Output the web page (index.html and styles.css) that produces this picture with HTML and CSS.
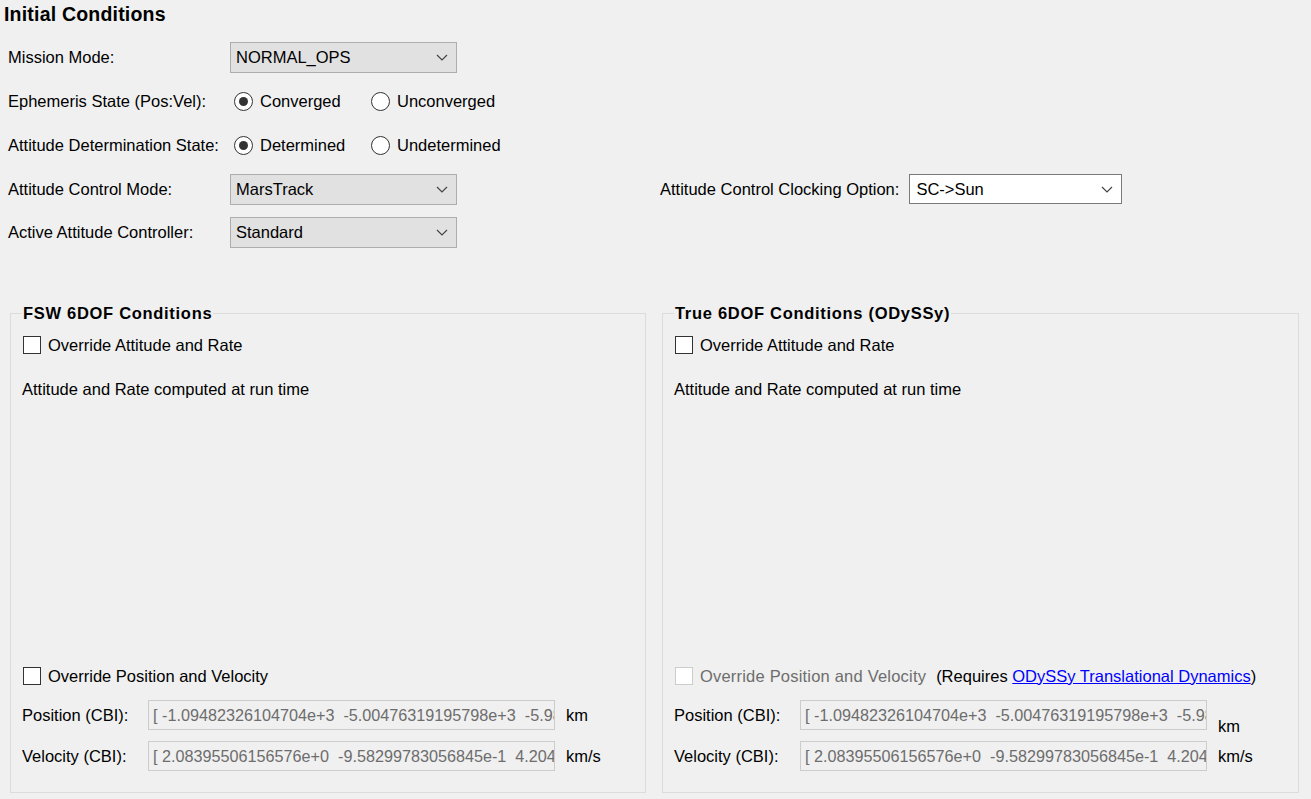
FILE: index.html
```html
<!DOCTYPE html>
<html>
<head>
<meta charset="utf-8">
<title>Initial Conditions</title>
<link rel="stylesheet" href="styles.css">
</head>
<body>
<div class="page">
  <h1 class="title">Initial Conditions</h1>
  <div class="form">
    <div class="row">
      <span class="label">Mission Mode:</span>
      <div class="combo"><span class="combo-text">NORMAL_OPS</span><svg class="chev" viewBox="0 0 12 7"><polyline points="1,1 6,6 11,1"/></svg></div>
    </div>
    <div class="row">
      <span class="label">Ephemeris State (Pos:Vel):</span>
      <div class="radios">
        <span class="radio"><span class="dot checked"></span>Converged</span>
        <span class="radio"><span class="dot"></span>Unconverged</span>
      </div>
    </div>
    <div class="row">
      <span class="label">Attitude Determination State:</span>
      <div class="radios">
        <span class="radio"><span class="dot checked"></span>Determined</span>
        <span class="radio"><span class="dot"></span>Undetermined</span>
      </div>
    </div>
    <div class="row">
      <span class="label">Attitude Control Mode:</span>
      <div class="combo"><span class="combo-text">MarsTrack</span><svg class="chev" viewBox="0 0 12 7"><polyline points="1,1 6,6 11,1"/></svg></div>
      <span class="clock-label">Attitude Control Clocking Option:</span>
      <div class="combo combo-white"><span class="combo-text">SC-&gt;Sun</span><svg class="chev" viewBox="0 0 12 7"><polyline points="1,1 6,6 11,1"/></svg></div>
    </div>
    <div class="row row-last">
      <span class="label">Active Attitude Controller:</span>
      <div class="combo"><span class="combo-text">Standard</span><svg class="chev" viewBox="0 0 12 7"><polyline points="1,1 6,6 11,1"/></svg></div>
    </div>
  </div>

  <div class="groups">
    <fieldset class="group group-left">
      <legend>FSW 6DOF Conditions</legend>
      <div class="group-body">
        <div class="check"><span class="box"></span>Override Attitude and Rate</div>
        <p class="note">Attitude and Rate computed at run time</p>
        <div class="spacer"></div>
        <div class="check"><span class="box"></span>Override Position and Velocity</div>
        <div class="vec-row vec-first">
          <span class="vec-label">Position (CBI):</span>
          <input class="vec" readonly value="[ -1.09482326104704e+3  -5.00476319195798e+3  -5.98246197330785e+3 ]">
          <span class="unit">km</span>
        </div>
        <div class="vec-row">
          <span class="vec-label">Velocity (CBI):</span>
          <input class="vec" readonly value="[ 2.08395506156576e+0  -9.58299783056845e-1  4.20455093267434e+0 ]">
          <span class="unit">km/s</span>
        </div>
      </div>
    </fieldset>
    <fieldset class="group group-right">
      <legend>True 6DOF Conditions (ODySSy)</legend>
      <div class="group-body">
        <div class="check"><span class="box"></span>Override Attitude and Rate</div>
        <p class="note">Attitude and Rate computed at run time</p>
        <div class="spacer"></div>
        <div class="check check-disabled"><span class="box"></span><span class="dis-text">Override Position and Velocity</span><span class="req">(Requires <a href="#" class="link">ODySSy Translational Dynamics</a>)</span></div>
        <div class="vec-row vec-first">
          <span class="vec-label">Position (CBI):</span>
          <input class="vec" readonly value="[ -1.09482326104704e+3  -5.00476319195798e+3  -5.98246197330785e+3 ]">
          <span class="unit unit-low">km</span>
        </div>
        <div class="vec-row">
          <span class="vec-label">Velocity (CBI):</span>
          <input class="vec" readonly value="[ 2.08395506156576e+0  -9.58299783056845e-1  4.20455093267434e+0 ]">
          <span class="unit">km/s</span>
        </div>
      </div>
    </fieldset>
  </div>
</div>
</body>
</html>
```
FILE: styles.css
```css
* { box-sizing: border-box; }
html, body {
  margin: 0;
  padding: 0;
  background: #f0f0f0;
}
body {
  font-family: "Liberation Sans", Arial, sans-serif;
  font-size: 16.5px;
  color: #000;
  width: 1311px;
  height: 799px;
  overflow: hidden;
}
.page {
  padding: 2px 0 0 0;
}
.title {
  margin: 0 0 9px 4px;
  font-size: 19.5px;
  font-weight: bold;
  letter-spacing: 0.2px;
  line-height: 24px;
  height: 24px;
}
.form {
  display: flex;
  flex-direction: column;
  padding-left: 8px;
}
.row {
  display: flex;
  align-items: center;
  height: 44px;
}
.row-last { height: 42px; }
.label {
  width: 222px;
  flex: none;
}
.combo {
  width: 227px;
  height: 31px;
  flex: none;
  display: flex;
  align-items: center;
  justify-content: space-between;
  background: #e1e1e1;
  border: 1px solid #adadad;
  padding: 0 8px 0 5px;
}
.combo-text { line-height: 20px; }
.chev {
  width: 12px;
  height: 7px;
  fill: none;
  stroke: #444;
  stroke-width: 1.2;
}
.clock-label {
  margin-left: 203px;
  flex: none;
}
.combo-white {
  width: 213px;
  height: 30px;
  margin-left: 10px;
  background: #fff;
  border: 1px solid #7a7a7a;
  padding-left: 6px;
}
.radios {
  display: grid;
  grid-template-columns: 137px auto;
  padding-left: 4px;
}
.radio {
  display: flex;
  align-items: center;
  gap: 7px;
}
.dot {
  width: 19px;
  height: 19px;
  border: 1px solid #333;
  border-radius: 50%;
  background: #fff;
  display: flex;
  align-items: center;
  justify-content: center;
  flex: none;
}
.dot.checked::after {
  content: "";
  width: 9px;
  height: 9px;
  border-radius: 50%;
  background: #333;
}

.groups {
  display: flex;
  gap: 16px;
  padding-left: 10px;
  margin-top: 50px;
}
.group {
  margin: 0;
  border: 1px solid #dcdcdc;
  padding: 0 12px 21px 12px;
  height: 490px;
  min-width: 0;
  display: flex;
  flex-direction: column;
}
.group-left { width: 636px; }
.group-right { width: 637px; }
.group legend {
  font-weight: bold;
  font-size: 16.5px;
  letter-spacing: 0.7px;
  line-height: 20px;
  padding: 0 1px;
  margin-left: -1px;
}
.group-body {
  flex: 1;
  display: flex;
  flex-direction: column;
}
.check {
  display: flex;
  align-items: center;
  gap: 7px;
  height: 24px;
  margin-top: 10px;
}
.box {
  width: 18px;
  height: 18px;
  flex: none;
  border: 1px solid #333;
  background: #fff;
}
.note {
  margin: 22px 0 0 -1px;
  line-height: 20px;
}
.spacer { flex: 1; }
.check-disabled .box { border-color: #cccccc; }
.dis-text { color: #6d6d6d; letter-spacing: 0.2px; }
.req { margin-left: 3px; }
.link { color: #0000ff; text-decoration: underline; }
.vec-row {
  display: flex;
  align-items: center;
  margin-top: 11px;
}
.vec-first { margin-top: 12px; }
.vec-label {
  width: 126px;
  flex: none;
  margin-left: -1px;
}
.vec {
  width: 407px;
  height: 30px;
  flex: none;
  border: 1px solid #cccccc;
  background: #f0f0f0;
  color: #6d6d6d;
  font-family: "Liberation Sans", Arial, sans-serif;
  font-size: 16.2px;
  padding: 0 0 0 4px;
  margin: 0;
  outline: none;
}
.unit { margin-left: 11px; }
.unit-low { align-self: flex-end; margin-bottom: -6px; }
```
